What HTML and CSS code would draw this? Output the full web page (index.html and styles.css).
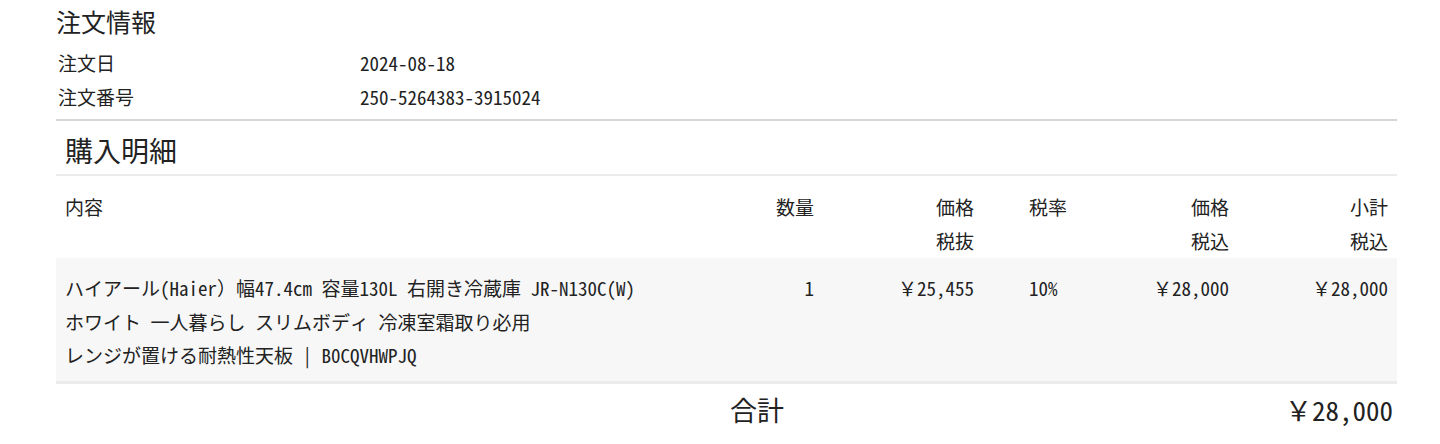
FILE: index.html
```html
<!DOCTYPE html>
<html lang="ja">
<head>
<meta charset="utf-8">
<title>注文情報</title>
<link rel="stylesheet" href="styles.css">
</head>
<body>
<main class="page">
  <section class="info">
    <h1 class="title">注文情報</h1>
    <dl class="info-list">
      <div class="info-row"><dt>注文日</dt><dd>2024-08-18</dd></div>
      <div class="info-row"><dt>注文番号</dt><dd>250-5264383-3915024</dd></div>
    </dl>
  </section>

  <section class="details">
    <h2 class="heading">購入明細</h2>
    <div class="grid head">
      <div class="c-desc">内容</div>
      <div class="c-qty">数量</div>
      <div class="c-price">価格<br>税抜</div>
      <div class="c-tax">税率</div>
      <div class="c-incl">価格<br>税込</div>
      <div class="c-sub">小計<br>税込</div>
    </div>
    <div class="grid item">
      <div class="c-desc">
        <span class="line">ハイアール(Haier）幅47.4cm 容量130L 右開き冷蔵庫 JR-N130C(W)</span>
        <span class="line">ホワイト 一人暮らし スリムボディ 冷凍室霜取り必用</span>
        <span class="line">レンジが置ける耐熱性天板 | B0CQVHWPJQ</span>
      </div>
      <div class="c-qty">1</div>
      <div class="c-price">￥25,455</div>
      <div class="c-tax">10%</div>
      <div class="c-incl">￥28,000</div>
      <div class="c-sub">￥28,000</div>
    </div>
    <div class="total">
      <span class="total-label">合計</span>
      <span class="total-value">￥28,000</span>
    </div>
  </section>
</main>
</body>
</html>
```

FILE: styles.css
```css
* { box-sizing: border-box; }

html, body {
  margin: 0;
  padding: 0;
  background: #ffffff;
}

body {
  font-family: "Noto Sans Mono CJK JP", "Noto Sans CJK JP", monospace;
  font-size: 19px;
  color: #222222;
}

.page {
  padding: 0 43px 0 56px;
}

.title {
  margin: 0;
  padding-top: 5px;
  font-size: 25px;
  line-height: 32px;
  font-weight: 400;
}

.info-list {
  margin: 9px 0 0;
  padding-bottom: 5px;
  border-bottom: 2px solid #d6d6d6;
}

.info-row {
  display: grid;
  grid-template-columns: 304px 1fr;
  line-height: 34px;
}

.info-row dt, .info-row dd {
  margin: 0;
}

.info-row dt {
  padding-left: 2px;
}

.heading {
  margin: 0;
  padding: 9px 0 4px 9px;
  font-size: 28px;
  line-height: 40px;
  font-weight: 400;
  border-bottom: 2px solid #ececec;
}

.grid {
  display: grid;
  grid-template-columns: 1fr 80px 160px 135px 120px 159px;
  padding: 0 9px;
  line-height: 34px;
}

.head {
  padding-top: 14px;
}

.item {
  background: #f7f7f7;
  padding-top: 13px;
  padding-bottom: 9px;
  border-bottom: 3px solid #ebebeb;
  line-height: 33.5px;
}

.c-qty, .c-price, .c-incl, .c-sub {
  text-align: right;
}

.c-tax {
  padding-left: 55px;
}

.line {
  display: block;
}

.total {
  display: grid;
  grid-template-columns: 674px 1fr auto;
  padding: 6px 4px 0 0;
  font-size: 27px;
  line-height: 40px;
}

.total-label {
  grid-column: 2;
}

.total-value {
  grid-column: 3;
}
```
